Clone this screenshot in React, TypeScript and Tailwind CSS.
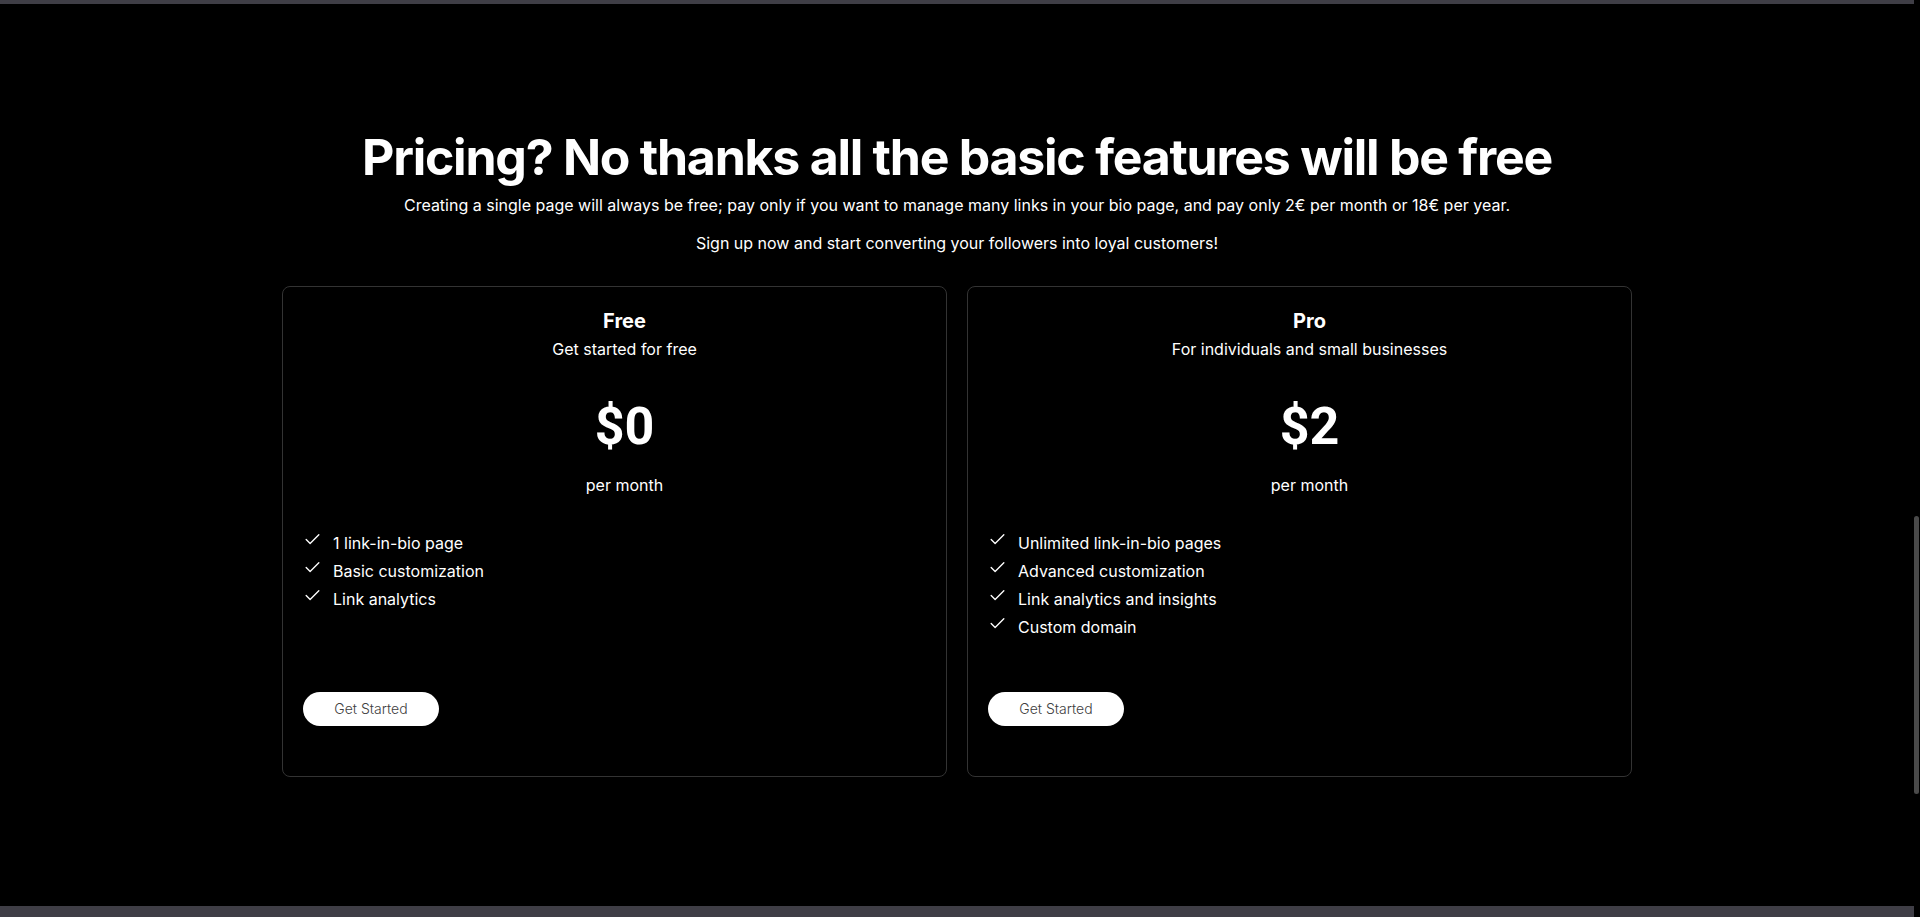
import { Check } from 'lucide-react';

const plans = [
  {
    name: 'Free',
    tagline: 'Get started for free',
    price: '$0',
    features: ['1 link-in-bio page', 'Basic customization', 'Link analytics'],
  },
  {
    name: 'Pro',
    tagline: 'For individuals and small businesses',
    price: '$2',
    features: [
      'Unlimited link-in-bio pages',
      'Advanced customization',
      'Link analytics and insights',
      'Custom domain',
    ],
  },
];

function PlanCard({ plan }: { plan: (typeof plans)[number] }) {
  return (
    <div className="flex flex-col rounded-lg border border-[#333333] px-5 pt-5 pb-[50px]">
      <div className="pl-5 text-center">
        <h3 className="text-[20px] leading-7 font-bold text-white">{plan.name}</h3>
        <p className="mt-0.5 text-base leading-6 text-white">{plan.tagline}</p>
        <div
          className="mt-10 text-[52px] leading-[52px] font-bold text-white"
          style={{ fontFamily: 'Roboto, Inter, sans-serif' }}
        >
          {plan.price}
        </div>
        <p className="mt-5 text-base leading-6 text-white">per month</p>
      </div>

      <ul className="mt-8 flex-1">
        {plan.features.map((feature) => (
          <li key={feature} className="flex items-start gap-[11px] text-base leading-7 text-white">
            <Check size={19} strokeWidth={1.7} className="mt-[1px] shrink-0" />
            <span>{feature}</span>
          </li>
        ))}
      </ul>

      <div className="mt-[51px]">
        <button className="h-[34px] w-[136px] rounded-full bg-white text-sm font-light text-neutral-700">
          Get Started
        </button>
      </div>
    </div>
  );
}

export default function App() {
  return (
    <div className="flex h-[917px] overflow-hidden bg-black" style={{ fontFamily: 'Inter, "Noto Sans", sans-serif' }}>
      <div className="flex flex-1 flex-col">
        <div className="h-[4px] bg-[#3f3e46]" />

        <section className="flex-1 pt-[129px]">
          <div className="mx-auto flex w-[1350px] flex-col items-center">
            <h2 className="text-[50px] leading-[48px] font-bold tracking-tight text-white">
              Pricing? No thanks all the basic features will be free
            </h2>
            <p className="mt-[12px] text-base leading-6 text-white">
              Creating a single page will always be free; pay only if you want to manage many links in your bio page, and pay only 2€ per month or 18€ per year.
            </p>
            <p className="mt-[14px] text-base leading-6 text-white">
              Sign up now and start converting your followers into loyal customers!
            </p>

            <div className="mt-[31px] grid w-full grid-cols-2 gap-5">
              {plans.map((plan) => (
                <PlanCard key={plan.name} plan={plan} />
              ))}
            </div>
          </div>
        </section>

        <div className="h-[11px] bg-[#3f3e46]" />
      </div>

      {/* scrollbar */}
      <div className="w-[6px] shrink-0">
        <div className="mt-[516px] h-[278px] w-[5px] rounded-full bg-[#4a4a4a]" />
      </div>
    </div>
  );
}
